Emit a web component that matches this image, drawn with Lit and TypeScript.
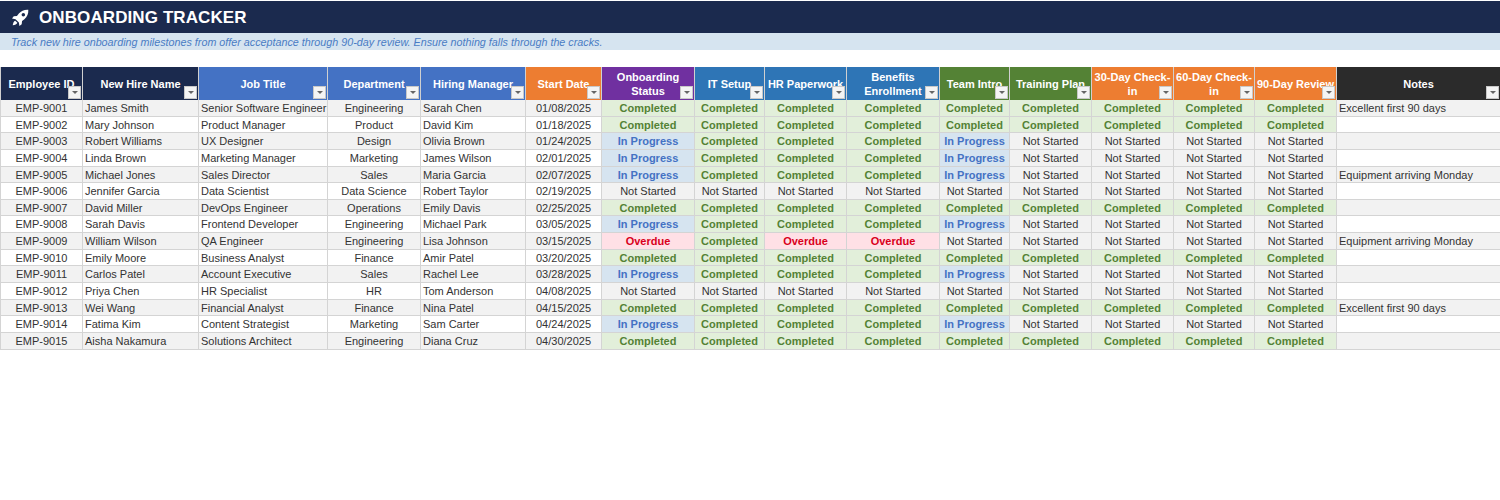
import { LitElement, css, html } from 'lit'
import { customElement } from 'lit/decorators.js'

type Status = 'Completed' | 'In Progress' | 'Not Started' | 'Overdue'

const C: Status = 'Completed'
const P: Status = 'In Progress'
const N: Status = 'Not Started'
const O: Status = 'Overdue'

const ALL_DONE = [C, C, C, C, C, C, C, C, C]
const MID = [P, C, C, C, P, N, N, N, N]
const NONE = [N, N, N, N, N, N, N, N, N]

const headers = [
  ['Employee ID', 'navy'],
  ['New Hire Name', 'navy'],
  ['Job Title', 'blue'],
  ['Department', 'blue'],
  ['Hiring Manager', 'blue'],
  ['Start Date', 'orange'],
  ['Onboarding Status', 'purple'],
  ['IT Setup', 'steel'],
  ['HR Paperwork', 'steel'],
  ['Benefits Enrollment', 'steel'],
  ['Team Intro', 'green'],
  ['Training Plan', 'green'],
  ['30-Day Check-in', 'orange'],
  ['60-Day Check-in', 'orange'],
  ['90-Day Review', 'orange'],
  ['Notes', 'dark'],
]

const EXCELLENT = 'Excellent first 90 days'
const EQUIPMENT = 'Equipment arriving Monday'

const rows: [string, string, string, string, string, string, Status[], string][] = [
  ['EMP-9001', 'James Smith', 'Senior Software Engineer', 'Engineering', 'Sarah Chen', '01/08/2025', ALL_DONE, EXCELLENT],
  ['EMP-9002', 'Mary Johnson', 'Product Manager', 'Product', 'David Kim', '01/18/2025', ALL_DONE, ''],
  ['EMP-9003', 'Robert Williams', 'UX Designer', 'Design', 'Olivia Brown', '01/24/2025', MID, ''],
  ['EMP-9004', 'Linda Brown', 'Marketing Manager', 'Marketing', 'James Wilson', '02/01/2025', MID, ''],
  ['EMP-9005', 'Michael Jones', 'Sales Director', 'Sales', 'Maria Garcia', '02/07/2025', MID, EQUIPMENT],
  ['EMP-9006', 'Jennifer Garcia', 'Data Scientist', 'Data Science', 'Robert Taylor', '02/19/2025', NONE, ''],
  ['EMP-9007', 'David Miller', 'DevOps Engineer', 'Operations', 'Emily Davis', '02/25/2025', ALL_DONE, ''],
  ['EMP-9008', 'Sarah Davis', 'Frontend Developer', 'Engineering', 'Michael Park', '03/05/2025', MID, ''],
  ['EMP-9009', 'William Wilson', 'QA Engineer', 'Engineering', 'Lisa Johnson', '03/15/2025', [O, C, O, O, N, N, N, N, N], EQUIPMENT],
  ['EMP-9010', 'Emily Moore', 'Business Analyst', 'Finance', 'Amir Patel', '03/20/2025', ALL_DONE, ''],
  ['EMP-9011', 'Carlos Patel', 'Account Executive', 'Sales', 'Rachel Lee', '03/28/2025', MID, ''],
  ['EMP-9012', 'Priya Chen', 'HR Specialist', 'HR', 'Tom Anderson', '04/08/2025', NONE, ''],
  ['EMP-9013', 'Wei Wang', 'Financial Analyst', 'Finance', 'Nina Patel', '04/15/2025', ALL_DONE, EXCELLENT],
  ['EMP-9014', 'Fatima Kim', 'Content Strategist', 'Marketing', 'Sam Carter', '04/24/2025', MID, ''],
  ['EMP-9015', 'Aisha Nakamura', 'Solutions Architect', 'Engineering', 'Diana Cruz', '04/30/2025', ALL_DONE, ''],
]

const statusClass: Record<Status, string> = {
  'Completed': 'done',
  'In Progress': 'progress',
  'Not Started': 'idle',
  'Overdue': 'late',
}

const WRAPPED = ['Onboarding Status', 'Benefits Enrollment', '30-Day Check-in', '60-Day Check-in']

@customElement('app-root')
export class AppRoot extends LitElement {
  static styles = css`
    :host {
      display: block;
      font-family: "Liberation Sans", Arial, sans-serif;
      font-size: 11px;
      color: #333;
      padding-top: 1px;
    }

    .title {
      height: 32px;
      box-sizing: border-box;
      padding: 1px 0 0 12px;
      background: #1b2a4e;
      color: #fff;
      display: flex;
      align-items: center;
      gap: 10px;
      font-size: 17px;
      font-weight: bold;
      letter-spacing: 0.1px;
    }

    .title svg {
      width: 17px;
      height: 17px;
      fill: #fff;
    }

    .subtitle {
      height: 17px;
      line-height: 18px;
      background: #d6e4f0;
      color: #4a7cc4;
      font-size: 10.75px;
      font-style: italic;
      padding-left: 11px;
    }

    .sheet {
      margin-top: 17px;
      display: grid;
      grid-template-columns: 82px 116px 129px 93px 105px 76px 93px 70px 82px 93px 70px 82px 82px 81px 82px 164px;
      grid-template-rows: 33px;
      grid-auto-rows: 16.65px;
    }

    .head {
      position: relative;
      overflow: hidden;
      display: flex;
      align-items: center;
      justify-content: center;
      text-align: center;
      color: #fff;
      font-weight: bold;
      line-height: 14px;
      border-left: 1px solid #d0d0d0;
    }

    .head span {
      flex: none;
      max-width: calc(100% - 2px);
    }

    .head.nowrap span {
      white-space: nowrap;
      max-width: none;
    }

    .navy { background: #1b2a4e; }
    .blue { background: #4472c4; }
    .orange { background: #ed7d31; }
    .purple { background: #7030a0; }
    .steel { background: #2e75b6; }
    .green { background: #548235; }
    .dark { background: #2b2b2b; }

    .filter {
      position: absolute;
      right: 1px;
      bottom: 1px;
      width: 13px;
      height: 13px;
      box-sizing: border-box;
      background: #f4f4f4;
      border: 1px solid #c8c8c8;
      display: flex;
      align-items: center;
      justify-content: center;
    }

    .filter::after {
      content: "";
      border-left: 3px solid transparent;
      border-right: 3px solid transparent;
      border-top: 3px solid #666;
    }

    .cell {
      box-sizing: border-box;
      line-height: 17px;
      border-left: 1px solid #d4d4d4;
      border-bottom: 1px solid #d4d4d4;
      white-space: nowrap;
      overflow: hidden;
      background: #fff;
    }

    .cell.even { background: #f2f2f2; }
    .cell.left { padding-left: 2px; }
    .cell.center { text-align: center; }

    .cell.done { background: #e2efda; color: #548235; font-weight: bold; }
    .cell.progress { background: #d6e4f0; color: #4472c4; font-weight: bold; }
    .cell.idle { background: #f2f2f2; color: #333; }
    .cell.late { background: #ffe0e6; color: #d9001b; font-weight: bold; }
  `

  render() {
    return html`
      <div class="title">
        <svg viewBox="0 0 24 24">
          <path d="M23 1c-5.500-.4-10 1.500-13.300 5.500L7 9.800l-4.500.5L0 13.500l5 .8 4.700 4.700.8 5 3.200-2.500.5-4.500 3.300-2.700C21.500 11 23.400 6.500 23 1zM16 10.500a2.500 2.500 0 1 1 0-5 2.500 2.500 0 0 1 0 5z"/>
          <path d="M4.500 16.500c-2 .8-3 3-3.500 6.500 3.500-.5 5.700-1.500 6.500-3.500z"/>
        </svg>
        <span>ONBOARDING TRACKER</span>
      </div>
      <div class="subtitle">Track new hire onboarding milestones from offer acceptance through 90-day review. Ensure nothing falls through the cracks.</div>
      <div class="sheet">
        ${headers.map(([label, color]) => html`
          <div class="head ${color} ${WRAPPED.includes(label) ? '' : 'nowrap'}">
            <span>${label}</span>
            <div class="filter"></div>
          </div>
        `)}
        ${rows.map((row, i) => this.#renderRow(row, i))}
      </div>
    `
  }

  #renderRow(row: (typeof rows)[number], i: number) {
    const [id, name, job, dept, manager, start, statuses, notes] = row
    const stripe = i % 2 === 0 ? 'even' : ''
    return html`
      <div class="cell center ${stripe}">${id}</div>
      <div class="cell left ${stripe}">${name}</div>
      <div class="cell left ${stripe}">${job}</div>
      <div class="cell center ${stripe}">${dept}</div>
      <div class="cell left ${stripe}">${manager}</div>
      <div class="cell center ${stripe}">${start}</div>
      ${statuses.map(s => html`<div class="cell center ${statusClass[s]}">${s}</div>`)}
      <div class="cell left ${stripe}">${notes}</div>
    `
  }
}

declare global {
  interface HTMLElementTagNameMap {
    'app-root': AppRoot
  }
}
